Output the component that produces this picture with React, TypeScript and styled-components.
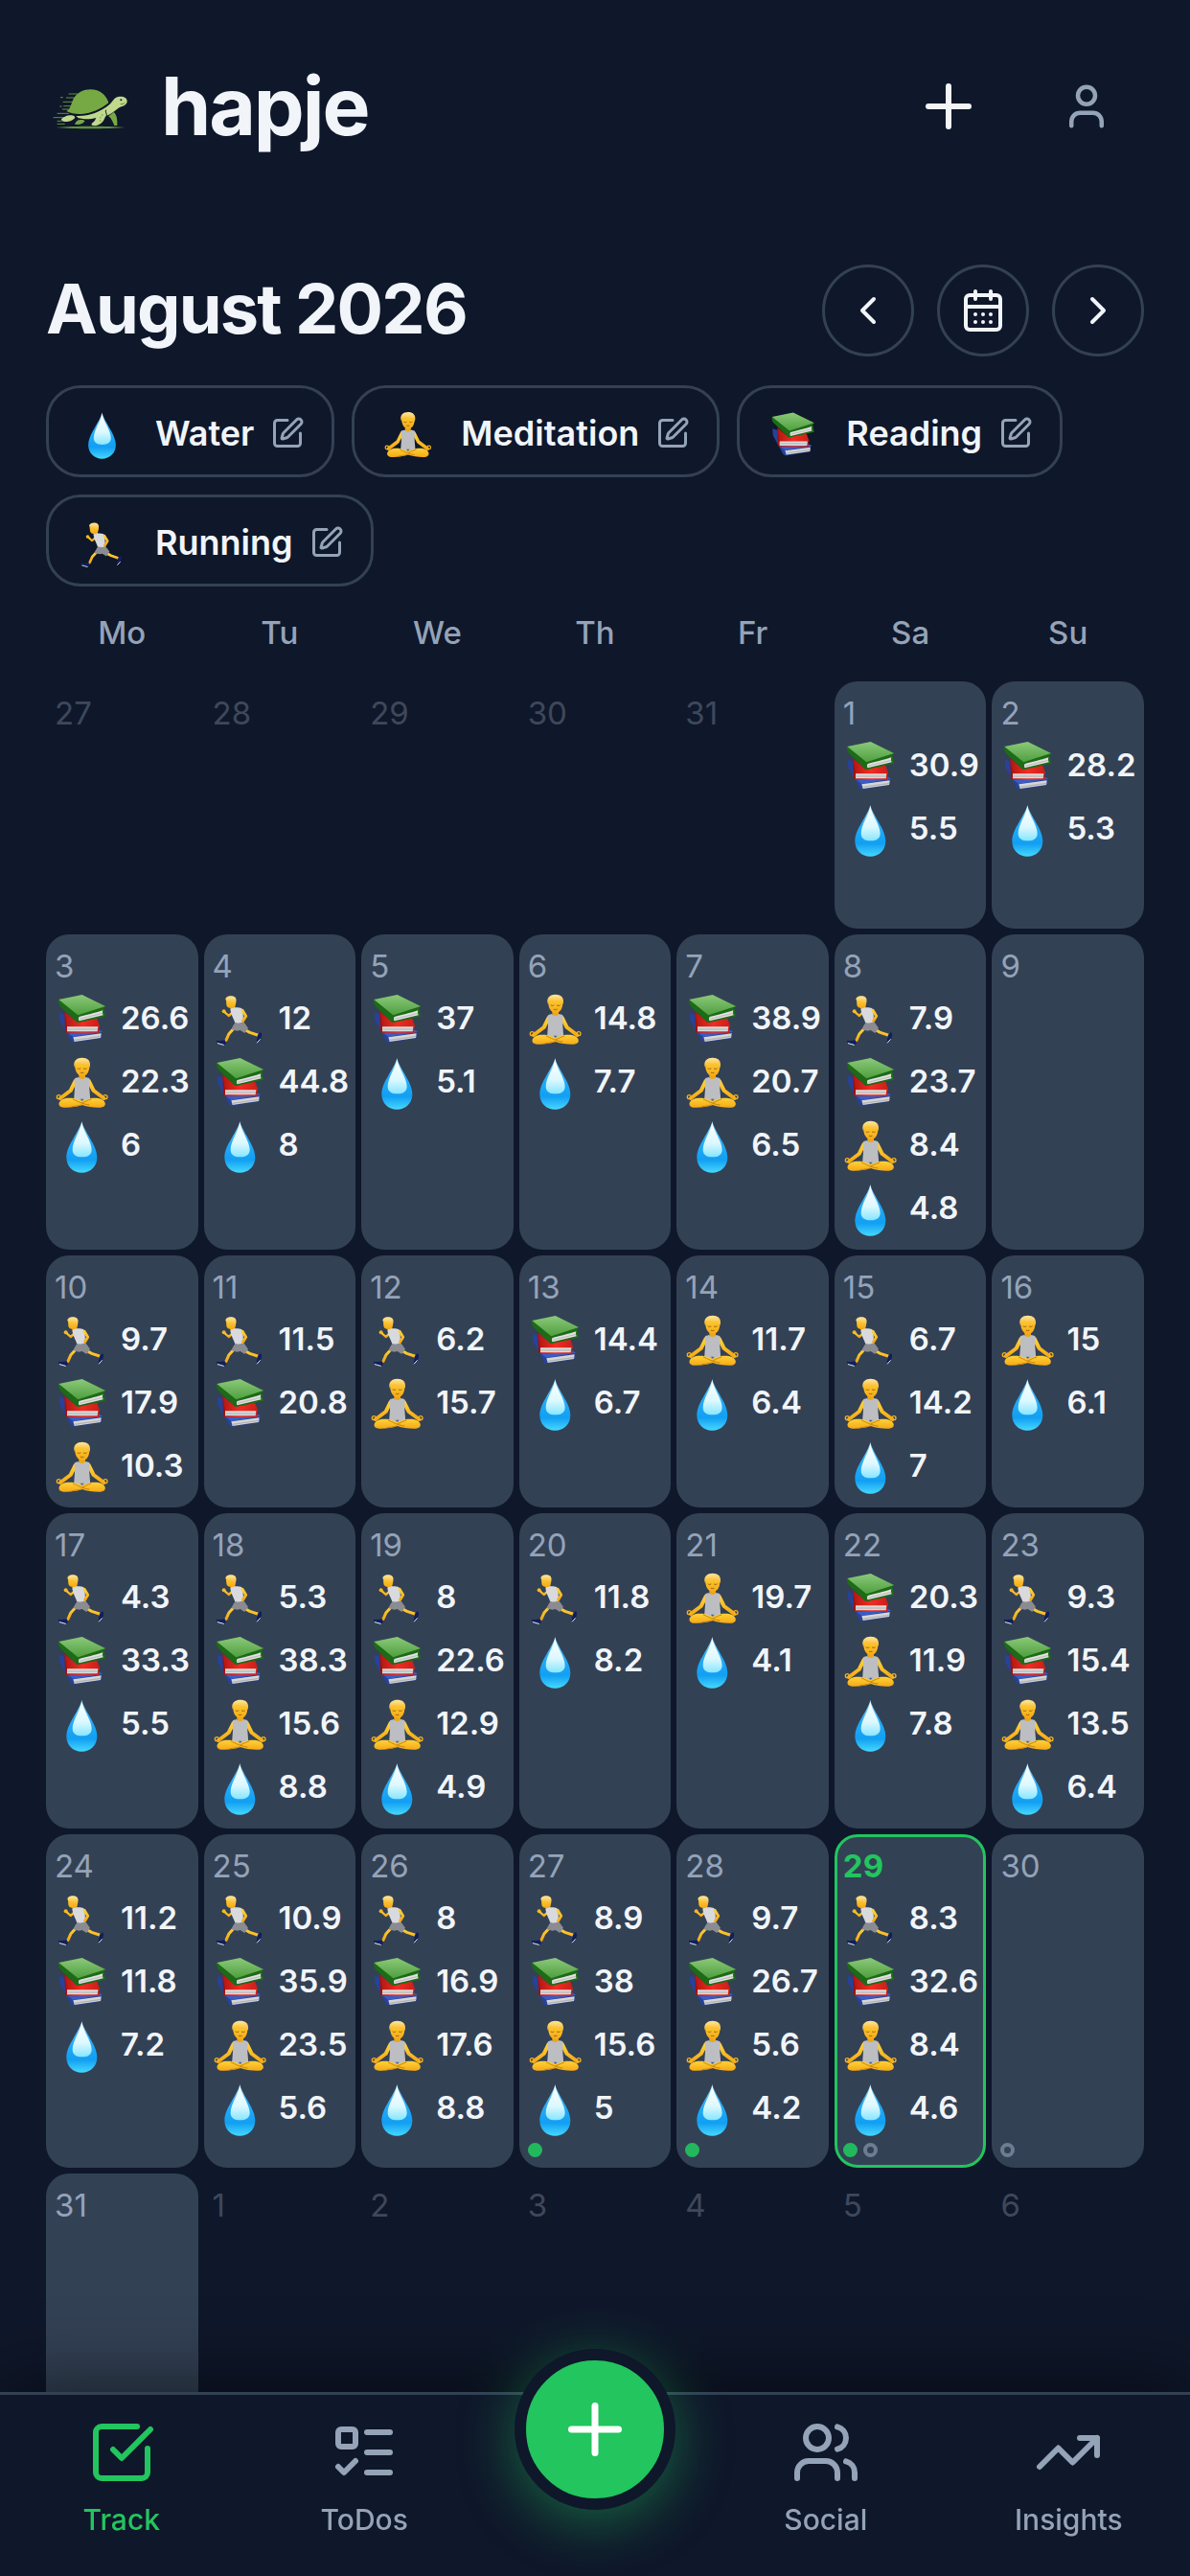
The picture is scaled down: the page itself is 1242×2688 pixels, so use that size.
import React, { useState } from "react";
import styled, { createGlobalStyle } from "styled-components";
import {
  CalendarDays,
  ChevronLeft,
  ChevronRight,
  ListTodo,
  Plus,
  SquareCheckBig,
  SquarePen,
  TrendingUp,
  User,
  Users,
} from "lucide-react";

type Habit = "water" | "meditation" | "reading" | "running";
type Task = "done" | "open";
type Entry = [Habit, number];

interface Day {
  day: number;
  outside?: boolean;
  entries?: Entry[];
  tasks?: Task[];
}

const HABITS: { id: Habit; name: string }[] = [
  { id: "water", name: "Water" },
  { id: "meditation", name: "Meditation" },
  { id: "reading", name: "Reading" },
  { id: "running", name: "Running" },
];

const WEEKDAYS = ["Mo", "Tu", "We", "Th", "Fr", "Sa", "Su"];

const TODAY = 29;

// values per day, in the order running / reading / meditation / water
const LOG: (number | null)[][] = [
  [null, 30.9, null, 5.5],
  [null, 28.2, null, 5.3],
  [null, 26.6, 22.3, 6],
  [12, 44.8, null, 8],
  [null, 37, null, 5.1],
  [null, null, 14.8, 7.7],
  [null, 38.9, 20.7, 6.5],
  [7.9, 23.7, 8.4, 4.8],
  [null, null, null, null],
  [9.7, 17.9, 10.3, null],
  [11.5, 20.8, null, null],
  [6.2, null, 15.7, null],
  [null, 14.4, null, 6.7],
  [null, null, 11.7, 6.4],
  [6.7, null, 14.2, 7],
  [null, null, 15, 6.1],
  [4.3, 33.3, null, 5.5],
  [5.3, 38.3, 15.6, 8.8],
  [8, 22.6, 12.9, 4.9],
  [11.8, null, null, 8.2],
  [null, null, 19.7, 4.1],
  [null, 20.3, 11.9, 7.8],
  [9.3, 15.4, 13.5, 6.4],
  [11.2, 11.8, null, 7.2],
  [10.9, 35.9, 23.5, 5.6],
  [8, 16.9, 17.6, 8.8],
  [8.9, 38, 15.6, 5],
  [9.7, 26.7, 5.6, 4.2],
  [8.3, 32.6, 8.4, 4.6],
  [null, null, null, null],
  [null, null, null, null],
];

const TASKS: Record<number, Task[]> = {
  27: ["done"],
  28: ["done"],
  29: ["done", "open"],
  30: ["open"],
};

const ORDER: Habit[] = ["running", "reading", "meditation", "water"];

const toEntries = (values: (number | null)[]) =>
  values.map((v, i) => [ORDER[i], v]).filter(([, v]) => v !== null) as Entry[];

const DAYS: Day[] = [
  ...[27, 28, 29, 30, 31].map(day => ({ day, outside: true })),
  ...LOG.map((values, i) => ({ day: i + 1, entries: toEntries(values), tasks: TASKS[i + 1] })),
  ...[1, 2, 3, 4, 5, 6].map(day => ({ day, outside: true })),
];

function EmojiSprite() {
  return (
    <Sprite aria-hidden="true">
      <defs>
        <linearGradient id="dropBody" x1="0" y1="0" x2="0" y2="1">
          <stop offset="0" stopColor="#a8e8ff" />
          <stop offset="0.35" stopColor="#27aefa" />
          <stop offset="0.75" stopColor="#129ff2" />
          <stop offset="1" stopColor="#45d8ff" />
        </linearGradient>
        <linearGradient id="dropShine" x1="0" y1="0" x2="0" y2="1">
          <stop offset="0" stopColor="#ffffff" />
          <stop offset="0.6" stopColor="#dcf8ff" />
          <stop offset="1" stopColor="#86e6ff" />
        </linearGradient>
        <linearGradient id="bookGreen" x1="0" y1="0" x2="0" y2="1">
          <stop offset="0" stopColor="#8cc97a" />
          <stop offset="1" stopColor="#4f9f3f" />
        </linearGradient>
        <linearGradient id="bookRed" x1="0" y1="0" x2="1" y2="0">
          <stop offset="0" stopColor="#b01712" />
          <stop offset="0.5" stopColor="#f22c22" />
          <stop offset="1" stopColor="#c81f18" />
        </linearGradient>
        <linearGradient id="skin" x1="0" y1="0" x2="0" y2="1">
          <stop offset="0" stopColor="#ffd23a" />
          <stop offset="1" stopColor="#f5a914" />
        </linearGradient>
        <linearGradient id="hair" x1="0" y1="0" x2="0" y2="1">
          <stop offset="0" stopColor="#ffe89a" />
          <stop offset="1" stopColor="#f3ac1b" />
        </linearGradient>
      </defs>

      <symbol id="water" viewBox="0 0 180 180">
        <path
          fill="url(#dropBody)"
          d="M85 18C79 50 37 92 37 131c0 28 21 48 48 48s48-20 48-48C133 92 91 50 85 18Z"
        />
        <path
          fill="url(#dropShine)"
          d="M85 22C81 50 56 80 56 107c0 16 12 23 30 23s30-7 30-23C116 80 89 50 85 22Z"
        />
      </symbol>

      <symbol id="reading" viewBox="0 0 180 180">
        <path fill="#26429b" d="M14 74 32 80l8 56 108-6 2 4-4 4 1 16-87 14-8-4-36-66Z" />
        <path fill="#3a5cc4" d="m40 136 100-8 10 6-92 16Z" />
        <path fill="#d6d6d6" d="m58 151 88-12-2 14-82 12Z" />
        <path fill="#b3b3b3" d="m60 158 85-12v4l-84 12Z" />
        <path fill="url(#bookRed)" d="M31 70 70 104l61-16 11 30-4 2 2 17H37Z" />
        <path fill="#9b120d" d="m31 70 8 48-2 19-4-6Z" />
        <path fill="#dadada" d="M39 118h97l-2 15H39Z" />
        <path fill="#b8b8b8" d="M39 124h96v4H39Z" />
        <path fill="#1d6b17" d="m12 34 74-14 73 34-5 6 5 26-84 19c-3 0-6-1-8-3L17 53c-4-5-5-12-5-19Z" />
        <path fill="url(#bookGreen)" d="m13 33 73-15 73 36-86 28Z" />
        <path fill="#e2e2e2" d="M77 87c20-5 50-12 74-20-2 5-1 10 1 15l-75 18c-3-4-3-9 0-13Z" />
        <path fill="#bfbfbf" d="m77 92 73-18v4l-73 18Z" />
      </symbol>

      <symbol id="meditation" viewBox="0 0 180 180">
        <path
          fill="none"
          stroke="url(#skin)"
          strokeWidth="12"
          strokeLinecap="round"
          strokeLinejoin="round"
          d="m65 90-15 30-32 24M107 90l15 30 32 24"
        />
        <circle cx="13" cy="140" r="6" fill="none" stroke="#f5b21d" strokeWidth="4" />
        <circle cx="159" cy="140" r="6" fill="none" stroke="#f5b21d" strokeWidth="4" />
        <path fill="#eda51c" d="M76 66h20v22H76Z" />
        <path
          fill="#bdbec2"
          d="M63 82c5-3 9-3 12-4 2 8 20 8 22 0 4 1 8 1 12 4 2 8-1 20 0 32l3 38H60l3-38c1-12-2-24 0-32Z"
        />
        <path
          fill="url(#skin)"
          d="M64 42c0-14 9-22 22-22s23 8 23 22c0 20-9 33-22 33S64 62 64 42Z"
        />
        <path
          fill="url(#hair)"
          d="M61 42c-2-16 9-25 25-25s27 8 25 26l-4 8-3-14c-13 0-22-1-30-5l-8 6-2 12Z"
        />
        <path
          fill="none"
          stroke="#9c6412"
          strokeWidth="3"
          strokeLinecap="round"
          d="M72 51c3 2 6 2 9 0M91 51c3 2 6 2 9 0M82 64c3 1 5 1 8 0"
        />
        <path
          fill="url(#skin)"
          d="M20 150c10-8 28-8 40-6l26 8 26-8c12-2 31-2 40 6 11 9 8 22-8 23-20 1-40-2-58-8-18 6-38 9-58 8-16-1-19-14-8-23Z"
        />
        <path
          fill="none"
          stroke="#c98508"
          strokeWidth="3"
          strokeLinecap="round"
          d="M58 147c14 6 27 15 50 18M114 147c-10 3-18 7-26 11M84 165c-11 3-20 4-30 5"
        />
        <path fill="#40639a" d="m80 146 12 0-6 6Z" />
      </symbol>

      <symbol id="running" viewBox="0 0 180 180">
        <path
          fill="none"
          stroke="url(#skin)"
          strokeWidth="7"
          strokeLinecap="round"
          strokeLinejoin="round"
          d="M64 72 50 84 37 72"
        />
        <circle cx="35" cy="70" r="6" fill="#f9b91f" />
        <path
          fill="none"
          stroke="url(#skin)"
          strokeWidth="9"
          strokeLinecap="round"
          strokeLinejoin="round"
          d="m66 124-15 16-9 20M98 126l18 10 24 8"
        />
        <path
          fill="#101f5c"
          d="M12 161c8 2 17 1 25-1 4 3 4 8 3 14-9 1-21-3-28-8ZM150 136c5 3 4 12 0 20-3 7-8 11-13 12 0-8 3-18 4-25 3-1 5-5 9-7Z"
        />
        <path stroke="#e6e9f2" strokeWidth="3" strokeLinecap="round" d="m16 170 18 5M139 168l9-10" />
        <path fill="#f0a91c" d="M56 50h14v14H56Z" />
        <path
          fill="#d9dade"
          d="M55 62c10-5 26-5 36-1 6 14 4 28 5 46-8 4-18 4-26 0-4-16-13-25-15-45Z"
        />
        <path
          fill="#8b8c91"
          d="M71 104c8 4 17 3 26-1l14 19-11 16-14-9-9 2-18-4c2-8 6-15 12-23Z"
        />
        <path
          fill="none"
          stroke="url(#skin)"
          strokeWidth="9"
          strokeLinecap="round"
          strokeLinejoin="round"
          d="m93 67 11 18-9 15"
        />
        <path fill="url(#skin)" d="M42 36c4-10 27-10 30 2 2 12-3 22-13 22-9 0-16-4-16-12Z" />
        <path
          fill="url(#hair)"
          d="M40 34c0-9 10-13 20-12 11 1 16 9 13 19-1 6-4 10-8 11l-5-14c-8 0-15-1-20-4Z"
        />
      </symbol>
    </Sprite>
  );
}

function Turtle() {
  return (
    <svg width="96" height="96" viewBox="18 -51 288 288" aria-hidden="true">
      <path
        stroke="#5f9140"
        strokeWidth="3"
        strokeLinecap="round"
        d="M90 54h26M64 65h6M82 66h26M72 79h32M62 93h5M74 92h24M70 102h18M54 115h34M42 128h32M54 139h12M54 148h22"
      />
      <path
        fill="#76a944"
        d="M82 108c14-6 14-26 24-42 11-17 30-26 51-26 30 0 50 18 57 42-24 19-52 33-85 35-17 1-34-2-47-9Z"
      />
      <path
        fill="#bfd98d"
        d="M112 123c38 2 74-10 104-35 10-9 14-22 28-25 15-3 28 3 28 14 0 9-9 14-18 17-14 5-24 20-42 27-6 1-8 4-10 9-4 11-12 18-20 21-7 3-17 4-21 0-3-4 5-8 10-14l4-8c-20 6-40 4-55 1Z"
      />
      <path fill="#bfd98d" d="M66 133c8-8 20-14 32-12 10 2 14 6 8 11-8 7-18 10-28 9-7 0-13-3-12-8Z" />
      <path
        fill="#76a944"
        d="M108 148c4-7 8-13 18-13 7 0 12 2 14 3-4 8-14 12-24 12-5 0-8-1-8-2ZM214 124l16-13c9 8 12 21 11 42h-9c-5-11-8-21-18-29Z"
      />
      <path fill="none" stroke="#0f172a" strokeWidth="3" d="M206 104c-4 6 4 12 2 22" />
      <circle cx="253" cy="73" r="3" fill="#0f172a" />
      <path fill="none" stroke="#3c5a26" strokeWidth="2" strokeLinecap="round" d="M252 86c5 1 9-1 12-4" />
      <path fill="#76a944" d="M186 126h4v4h-4ZM192 118h4v4h-4ZM186 136h4v4h-4Z" />
      <path fill="#5f9140" d="M50 159c60-5 160-5 216 0-60 5-160 5-216 0Z" />
    </svg>
  );
}

function Emoji({ name, size }: { name: Habit; size: number }) {
  return (
    <svg width={size} height={size} role="img" aria-label={name}>
      <use href={`#${name}`} />
    </svg>
  );
}

function DayCell({ item }: { item: Day }) {
  const today = !item.outside && item.day === TODAY;

  return (
    <Cell type="button" $outside={item.outside} $today={today}>
      <DayNumber $today={today}>{item.day}</DayNumber>
      {item.entries?.map(([habit, value]) => (
        <EntryRow key={habit}>
          <Emoji name={habit} size={60} />
          {value}
        </EntryRow>
      ))}
      {item.tasks && (
        <Dots>
          {item.tasks.map((task, i) => (
            <Dot key={i} $done={task === "done"} />
          ))}
        </Dots>
      )}
    </Cell>
  );
}

export default function App() {
  const [tab, setTab] = useState("Track");

  const renderTab = (name: string, Icon: typeof Plus) => (
    <TabLink href={`#${name.toLowerCase()}`} $active={tab === name} onClick={() => setTab(name)}>
      <Icon size={72} />
      {name}
    </TabLink>
  );

  return (
    <>
      <GlobalStyle />
      <EmojiSprite />
      <Page>
        <Header>
          <Brand>
            <Turtle />
            hapje
          </Brand>
          <HeaderButton type="button" aria-label="Add">
            <Plus size={72} />
          </HeaderButton>
          <HeaderButton type="button" aria-label="Profile" $muted>
            <User size={54} />
          </HeaderButton>
        </Header>

        <main>
          <MonthBar>
            <Month>August 2026</Month>
            <RoundButton type="button" aria-label="Previous month">
              <ChevronLeft size={48} />
            </RoundButton>
            <RoundButton type="button" aria-label="Go to today">
              <CalendarDays size={48} />
            </RoundButton>
            <RoundButton type="button" aria-label="Next month">
              <ChevronRight size={48} />
            </RoundButton>
          </MonthBar>

          <Chips>
            {HABITS.map(habit => (
              <Chip type="button" key={habit.id}>
                <ChipEmoji>
                  <Emoji name={habit.id} size={54} />
                </ChipEmoji>
                {habit.name}
                <SquarePen size={36} />
              </Chip>
            ))}
          </Chips>

          <Weekdays>
            {WEEKDAYS.map(name => (
              <span key={name}>{name}</span>
            ))}
          </Weekdays>

          <Calendar>
            {DAYS.map((item, i) => (
              <DayCell key={i} item={item} />
            ))}
          </Calendar>
        </main>
      </Page>

      <TabBar>
        {renderTab("Track", SquareCheckBig)}
        {renderTab("ToDos", ListTodo)}
        <FabSlot>
          <Fab type="button" aria-label="New entry">
            <Plus size={84} />
          </Fab>
        </FabSlot>
        {renderTab("Social", Users)}
        {renderTab("Insights", TrendingUp)}
      </TabBar>
    </>
  );
}

const GlobalStyle = createGlobalStyle`
  * {
    box-sizing: border-box;
  }
  body {
    margin: 0;
    background: #0f172a;
    color: #f1f5f9;
    font-family: Inter, "Liberation Sans", sans-serif;
  }
  button {
    margin: 0;
    padding: 0;
    border: none;
    background: none;
    color: inherit;
    font: inherit;
    cursor: pointer;
  }
`;

const Sprite = styled.svg`
  position: absolute;
  width: 0;
  height: 0;
`;

const Page = styled.div`
  padding: 51px 48px 150px;
`;

const Header = styled.header`
  display: flex;
  align-items: center;
  gap: 24px;
  margin-bottom: 105px;
`;

const Brand = styled.h1`
  display: flex;
  flex: 1;
  align-items: center;
  gap: 24px;
  margin: 0;
  font-size: 84px;
  font-weight: 700;
  line-height: 120px;
  letter-spacing: -0.025em;
`;

const HeaderButton = styled.button<{ $muted?: boolean }>`
  display: flex;
  align-items: center;
  justify-content: center;
  width: 120px;
  height: 120px;
  color: ${({ $muted }) => ($muted ? "#94a3b8" : "#f1f5f9")};
`;

const MonthBar = styled.div`
  display: flex;
  gap: 24px;
  margin-bottom: 30px;
`;

const Month = styled.h2`
  flex: 1;
  margin: 0;
  font-size: 72px;
  font-weight: 700;
  line-height: 92px;
  letter-spacing: -0.025em;
`;

const RoundButton = styled.button`
  display: flex;
  align-items: center;
  justify-content: center;
  width: 96px;
  height: 96px;
  border: 3px solid #334155;
  border-radius: 50%;
`;

const Chips = styled.div`
  display: flex;
  flex-wrap: wrap;
  gap: 18px;
`;

const Chip = styled.button`
  display: flex;
  align-items: center;
  height: 96px;
  padding: 4px 28px 0 27px;
  border: 3px solid #334155;
  border-radius: 36px;
  font-size: 36px;
  font-weight: 600;
  > svg {
    margin-left: 17px;
    color: #94a3b8;
  }
`;

const ChipEmoji = styled.span`
  display: flex;
  justify-content: center;
  width: 60px;
  margin-right: 24px;
`;

const Weekdays = styled.div`
  display: grid;
  grid-template-columns: repeat(7, minmax(0, 1fr));
  gap: 6px;
  margin: 24px 0 27px;
  color: #94a3b8;
  font-size: 33px;
  font-weight: 500;
  line-height: 48px;
  text-align: center;
`;

const Calendar = styled.div`
  display: grid;
  grid-template-columns: repeat(7, minmax(0, 1fr));
  grid-auto-rows: minmax(258px, auto);
  gap: 6px;
`;

const Cell = styled.button<{ $outside?: boolean; $today: boolean }>`
  display: flex;
  flex-direction: column;
  justify-content: flex-start;
  padding: 9px 6px 8px;
  border: 3px solid ${({ $today }) => ($today ? "#22c55e" : "transparent")};
  border-radius: 24px;
  background: ${({ $outside }) => ($outside ? "none" : "#334155")};
  opacity: ${({ $outside }) => ($outside ? 0.35 : 1)};
  text-align: left;
  white-space: nowrap;
`;

const DayNumber = styled.span<{ $today: boolean }>`
  color: ${({ $today }) => ($today ? "#22c55e" : "#94a3b8")};
  font-size: 33px;
  font-weight: ${({ $today }) => ($today ? 700 : 400)};
  line-height: 42px;
`;

const EntryRow = styled.span`
  display: flex;
  align-items: center;
  gap: 9px;
  height: 66px;
  font-size: 33px;
  font-weight: 600;
  svg {
    flex-shrink: 0;
  }
`;

const Dots = styled.span`
  display: flex;
  gap: 6px;
  margin-top: auto;
  padding-top: 4px;
`;

const Dot = styled.span<{ $done: boolean }>`
  width: 15px;
  height: 15px;
  border: 4px solid ${({ $done }) => ($done ? "#22c55e" : "#94a3b8")};
  border-radius: 50%;
  background: ${({ $done }) => ($done ? "#22c55e" : "none")};
  opacity: ${({ $done }) => ($done ? 0.9 : 0.6)};
`;

const TabBar = styled.nav`
  position: fixed;
  right: 0;
  bottom: 0;
  left: 0;
  display: flex;
  border-top: 3px solid #334155;
  background: #0f172a;
  box-shadow: 0 -12px 72px rgba(0, 0, 0, 0.5);
`;

const TabLink = styled.a<{ $active: boolean }>`
  display: flex;
  flex: 1;
  flex-direction: column;
  align-items: center;
  gap: 12px;
  padding: 24px 0 36px;
  color: ${({ $active }) => ($active ? "#22c55e" : "#94a3b8")};
  font-size: 30px;
  font-weight: 500;
  line-height: 45px;
  text-decoration: none;
`;

const FabSlot = styled.div`
  display: flex;
  justify-content: center;
  width: 228px;
`;

const Fab = styled.button`
  display: flex;
  align-items: center;
  justify-content: center;
  width: 168px;
  height: 168px;
  margin-top: -48px;
  border: 12px solid #0f172a;
  border-radius: 50%;
  background: #22c55e;
  box-shadow: 0 12px 60px rgba(34, 197, 94, 0.45);
  color: #fff;
`;
